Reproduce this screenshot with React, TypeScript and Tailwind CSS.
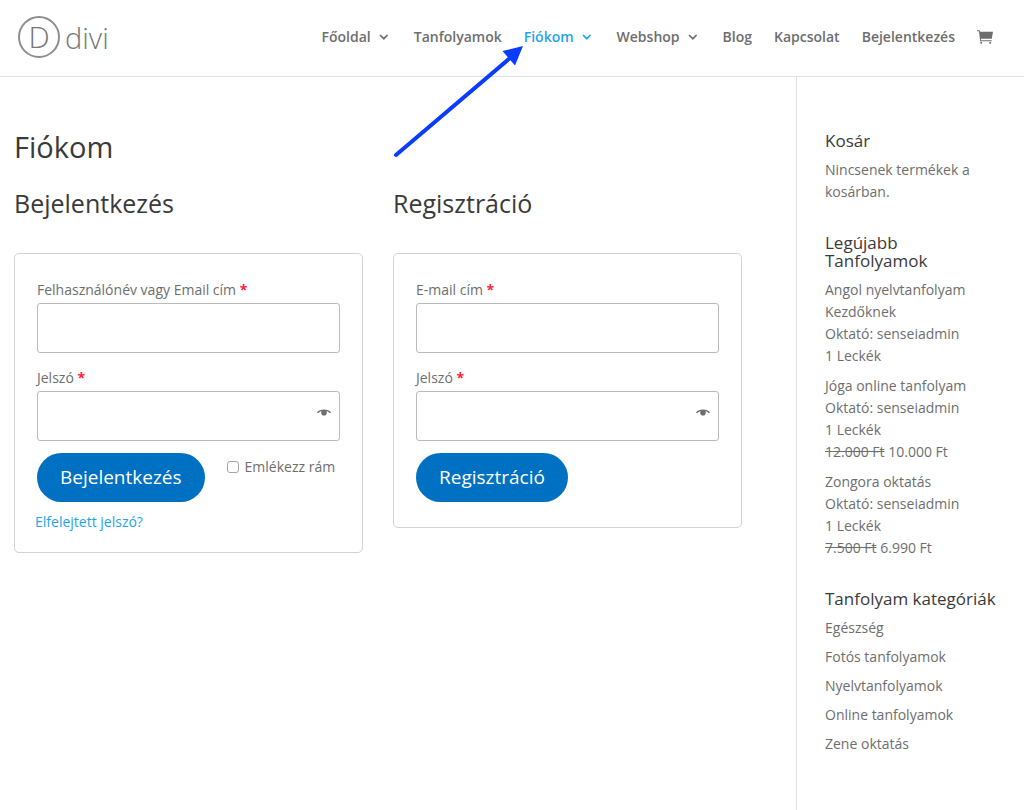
import { ReactNode } from "react";
import clsx from "clsx";

interface NavItem {
  label: string;
  active?: boolean;
  hasMenu?: boolean;
}

interface Course {
  title: string;
  oldPrice?: string;
  price?: string;
}

const NAV_ITEMS: NavItem[] = [
  { label: "Főoldal", hasMenu: true },
  { label: "Tanfolyamok" },
  { label: "Fiókom", hasMenu: true, active: true },
  { label: "Webshop", hasMenu: true },
  { label: "Blog" },
  { label: "Kapcsolat" },
  { label: "Bejelentkezés" },
];

const COURSES: Course[] = [
  { title: "Angol nyelvtanfolyam Kezdőknek" },
  { title: "Jóga online tanfolyam", oldPrice: "12.000 Ft", price: "10.000 Ft" },
  { title: "Zongora oktatás", oldPrice: "7.500 Ft", price: "6.990 Ft" },
];

const CATEGORIES = [
  "Egészség",
  "Fotós tanfolyamok",
  "Nyelvtanfolyamok",
  "Online tanfolyamok",
  "Zene oktatás",
];

function Logo() {
  return (
    <a href="#" className="flex items-center gap-[5px] font-light text-[#777]">
      <span className="flex h-[42px] w-[42px] items-center justify-center rounded-full border-2 border-[#8e8e8e] text-[30px] leading-none">
        D
      </span>
      <span className="text-[29px] leading-none">divi</span>
    </a>
  );
}

function ChevronIcon() {
  return (
    <svg viewBox="0 0 13 6" className="h-[6px] w-[13px]" fill="none" stroke="currentColor" strokeWidth="1.7" aria-hidden="true">
      <path d="M1 1l3.8 3.7L8.600 1" />
    </svg>
  );
}

function CartIcon() {
  return (
    <svg viewBox="0 0 16 14" className="h-[14px] w-4" fill="currentColor" aria-hidden="true">
      <path d="M0 .3h2.6l.5 1.5H16l-1.2 7H3.9l.2 1.4h10.6v1H3.2L1.9 1.3H0z" />
      <circle cx="4.2" cy="12.8" r="1" />
      <circle cx="13.2" cy="12.8" r="1" />
    </svg>
  );
}

function EyeIcon() {
  return (
    <svg viewBox="0 0 14 7" className="h-[7px] w-[14px]" aria-hidden="true">
      <path d="M.4 3.8C3.4.2 10.6.2 13.6 3.8" fill="none" stroke="currentColor" strokeWidth="1.1" />
      <circle cx="7" cy="3.7" r="2.8" fill="currentColor" />
    </svg>
  );
}

function Field({ id, label, type }: { id: string; label: string; type: "text" | "email" | "password" }) {
  return (
    <div className="mb-[14px]">
      <label htmlFor={id} className="mb-0.5 block">
        {label} <span className="font-bold text-[#ff1f3d]">*</span>
      </label>
      <div className="relative">
        <input
          id={id}
          type={type}
          className="block h-[50px] w-full rounded-[3px] border border-[#bbb] bg-white px-4 text-base"
        />
        {type === "password" && (
          <button type="button" aria-label="Jelszó megjelenítése" className="absolute top-[18px] right-[9px]">
            <EyeIcon />
          </button>
        )}
      </div>
    </div>
  );
}

function SubmitButton({ children }: { children: ReactNode }) {
  return (
    <button
      type="submit"
      className="h-[49px] rounded-full bg-[#0071c2] px-[23px] text-[19px] leading-none text-white"
    >
      {children}
    </button>
  );
}

function FormCard({ title, children }: { title: string; children: ReactNode }) {
  return (
    <section className="min-w-0 flex-1">
      <h2 className="text-[25px] leading-8 text-[#3a3a3a]">{title}</h2>
      <form className="mt-[34px] rounded-[5px] border border-[#d3d3d3] px-5 pt-[25px] pb-[19px]">
        {children}
      </form>
    </section>
  );
}

function Widget({ title, children }: { title: string; children: ReactNode }) {
  return (
    <section>
      <h4 className="mb-[9px] text-[17px] leading-[18px] text-[#3a3a3a]">{title}</h4>
      {children}
    </section>
  );
}

export default function App() {
  return (
    <div className="relative flex min-h-screen flex-col bg-white font-['Open_Sans',sans-serif] text-sm leading-[22px] text-[#6e6e6e]">
      <header className="flex h-[77px] shrink-0 items-center justify-between border-b border-[#e2e2e2] pr-[31px] pb-0.5 pl-[18px]">
        <Logo />
        <nav className="flex items-center gap-[22px] font-semibold">
          {NAV_ITEMS.map((item) => (
            <a
              key={item.label}
              href="#"
              className={clsx("flex items-center gap-2", item.active && "text-[#1ea5ee]")}
            >
              {item.label}
              {item.hasMenu && <ChevronIcon />}
            </a>
          ))}
          <a href="#" aria-label="Kosár">
            <CartIcon />
          </a>
        </nav>
      </header>

      <div className="flex flex-1">
        <main className="flex-1 pt-[50px] pr-[54px] pl-[14px]">
          <h1 className="text-[29px] leading-10 text-[#3a3a3a]">Fiókom</h1>
          <div className="mt-5 flex items-start gap-[30px]">
            <FormCard title="Bejelentkezés">
              <div className="px-0.5">
                <Field id="username" label="Felhasználónév vagy Email cím" type="text" />
                <Field id="password" label="Jelszó" type="password" />
                <div className="-mt-0.5 flex items-start gap-[22px]">
                  <SubmitButton>Bejelentkezés</SubmitButton>
                  <label className="flex items-center gap-[6px] pt-[3px]">
                    <input
                      type="checkbox"
                      className="h-3 w-3 appearance-none rounded-[3px] border border-[#a5a5a5] bg-white checked:bg-[#0071c2]"
                    />
                    Emlékezz rám
                  </label>
                </div>
              </div>
              <p className="mt-[9px]">
                <a href="#" className="text-[#1ea5ee]">Elfelejtett jelszó?</a>
              </p>
            </FormCard>

            <FormCard title="Regisztráció">
              <div className="px-0.5 pb-[6px]">
                <Field id="reg-email" label="E-mail cím" type="email" />
                <Field id="reg-password" label="Jelszó" type="password" />
                <div className="-mt-0.5">
                  <SubmitButton>Regisztráció</SubmitButton>
                </div>
              </div>
            </FormCard>
          </div>
        </main>

        <aside className="flex w-[228px] shrink-0 flex-col gap-[31px] border-l border-[#e2e2e2] pt-[55px] pr-5 pl-7">
          <Widget title="Kosár">
            <p>Nincsenek termékek a kosárban.</p>
          </Widget>
          <Widget title="Legújabb Tanfolyamok">
            <ul className="flex flex-col gap-2">
              {COURSES.map((course) => (
                <li key={course.title}>
                  <a href="#" className="block">{course.title}</a>
                  <p>Oktató: senseiadmin</p>
                  <p>1 Leckék</p>
                  {course.price && (
                    <p>
                      <del>{course.oldPrice}</del> {course.price}
                    </p>
                  )}
                </li>
              ))}
            </ul>
          </Widget>
          <Widget title="Tanfolyam kategóriák">
            <ul className="flex flex-col gap-[7px]">
              {CATEGORIES.map((category) => (
                <li key={category}>
                  <a href="#">{category}</a>
                </li>
              ))}
            </ul>
          </Widget>
        </aside>
      </div>

      {/* Arrow pointing at the account menu item */}
      <svg
        viewBox="0 0 132 114"
        className="pointer-events-none absolute top-[45px] left-[392px] h-[114px] w-[132px]"
        aria-hidden="true"
      >
        <path d="M4 110L118 13" stroke="#0a3cff" strokeWidth="4" strokeLinecap="round" />
        <path d="M131 1L110.5 6L123 20.5z" fill="#0a3cff" />
      </svg>
    </div>
  );
}
